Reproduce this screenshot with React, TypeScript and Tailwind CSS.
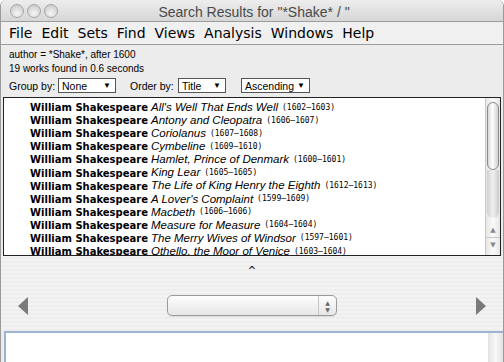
import React from "react"

const works: [string, string][] = [
  ["All's Well That Ends Well", "1602–1603"],
  ["Antony and Cleopatra", "1606–1607"],
  ["Coriolanus", "1607–1608"],
  ["Cymbeline", "1609–1610"],
  ["Hamlet, Prince of Denmark", "1600–1601"],
  ["King Lear", "1605–1605"],
  ["The Life of King Henry the Eighth", "1612–1613"],
  ["A Lover's Complaint", "1599–1609"],
  ["Macbeth", "1606–1606"],
  ["Measure for Measure", "1604–1604"],
  ["The Merry Wives of Windsor", "1597–1601"],
  ["Othello, the Moor of Venice", "1603–1604"],
]

const menus = ["File", "Edit", "Sets", "Find", "Views", "Analysis", "Windows", "Help"]

function Select({ label, w }: { label: string; w: string }) {
  return (
    <div className={`flex h-[15px] items-center justify-between border border-[#555] bg-white pl-[3px] pr-[4px] ${w}`}>
      <span>{label}</span>
      <span className="text-[8px] leading-none">▼</span>
    </div>
  )
}

function Light() {
  return (
    <div className="h-[14px] w-[14px] rounded-full border border-[#a5a5a5] bg-[radial-gradient(circle_at_50%_70%,#f6f6f6,#d2d2d2_70%,#bdbdbd)]" />
  )
}

export default function App() {
  return (
    <div
      className="flex h-[362px] w-[504px] flex-col overflow-hidden rounded-t-[6px] border-x border-[#9a9a9a] bg-[#ececec] text-black"
      style={{ fontFamily: '"DejaVu Sans", sans-serif' }}
    >
      {/* title bar */}
      <div className="relative flex h-[21px] shrink-0 items-center bg-[linear-gradient(#ededed,#d6d6d6)] pl-[9px]">
        <div className="flex gap-[3px]">
          <Light />
          <Light />
          <Light />
        </div>
        <div
          className="absolute inset-x-0 top-[2px] pl-[4px] text-center text-[14px] text-[#4a4a4a]"
          style={{ fontFamily: '"Liberation Sans", sans-serif' }}
        >
          Search Results for "*Shake* / "
        </div>
      </div>

      {/* menu bar */}
      <div className="flex h-[24px] shrink-0 items-center gap-[9px] border-y border-[#9c9c9c] bg-[#f0f0f0] pl-[8px] text-[14px]">
        {menus.map((m) => (
          <span key={m}>{m}</span>
        ))}
      </div>

      {/* query info */}
      <div className="flex shrink-0 flex-col pl-[8px] pt-[3px] text-[10px] leading-[14px]" style={{ fontFamily: '"Liberation Sans", sans-serif' }}>
        <span>author = *Shake*, after 1600</span>
        <span>19 works found in 0.6 seconds</span>
        <div className="mt-[2px] flex items-center text-[10.5px]">
          <span className="w-[49px]">Group by:</span>
          <Select label="None" w="w-[58px]" />
          <span className="ml-[14px] w-[48px]">Order by:</span>
          <Select label="Title" w="w-[48px]" />
          <div className="ml-[15px]">
            <Select label="Ascending" w="w-[69px]" />
          </div>
        </div>
      </div>

      {/* results list */}
      <div className="mx-[2px] mt-[4px] flex h-[159px] shrink-0 overflow-hidden border border-[#222] bg-white">
        <div className="flex-1 overflow-hidden pl-[26px] pt-[3px]">
          {works.map(([t, d]) => (
            <div key={t} className="flex h-[13.1px] items-center whitespace-nowrap">
              <span className="text-[10px] font-bold">William Shakespeare</span>
              <span className="ml-[3px] text-[11.5px] italic" style={{ fontFamily: '"Liberation Sans", sans-serif' }}>
                {t}
              </span>
              <span className="ml-[4px] text-[8px]" style={{ fontFamily: '"DejaVu Sans Mono", monospace' }}>
                ({d})
              </span>
            </div>
          ))}
        </div>
        <div className="flex w-[15px] shrink-0 flex-col border-l border-[#c8c8c8] bg-[linear-gradient(90deg,#e6e6e6,#fafafa_50%,#e6e6e6)]">
          <div className="mx-[1px] mt-[4px] h-[68px] rounded-full border border-[#8a8a8a] bg-[linear-gradient(90deg,#d8d8d8,#ffffff_45%,#cfcfcf)]" />
          <div className="mx-[1px] h-[48px] rounded-b-full bg-[linear-gradient(90deg,#d0d0d0,#f0f0f0_50%,#cacaca)]" />
          <div className="mt-[5px] flex h-[15px] items-center justify-center border-b border-[#c8c8c8] text-[7px] text-[#888]">▲</div>
          <div className="flex h-[14px] items-center justify-center text-[7px] text-[#888]">▼</div>
        </div>
      </div>

      {/* browser strip */}
      <div className="flex h-[75px] shrink-0 flex-col bg-[repeating-linear-gradient(0deg,#ededed_0px,#ededed_2px,#f3f3f3_2px,#f3f3f3_4px)]">
        <div className="flex h-[22px] items-center justify-center pt-[7px] text-[10px] leading-none">^</div>
        <div className="mt-[17px] flex items-center justify-between px-[17px]">
          <svg width="10" height="18" viewBox="0 0 10 18">
            <path d="M10 0 L0 9 L10 18 Z" fill="#7a7a7a" />
          </svg>
          <div className="flex h-[21px] w-[170px] items-center justify-end rounded-[5px] border border-[#9a9a9a] bg-[linear-gradient(#fdfdfd,#e6e6e6)] shadow-[0_1px_1px_rgba(0,0,0,0.1)]">
            <div className="flex h-full w-[18px] flex-col items-center justify-center border-l border-[#c5c5c5] text-[6px] leading-[7px] text-[#666]">
              <span>▲</span>
              <span>▼</span>
            </div>
          </div>
          <svg width="10" height="18" viewBox="0 0 10 18">
            <path d="M0 0 L10 9 L0 18 Z" fill="#7a7a7a" />
          </svg>
        </div>
      </div>

      {/* detail pane */}
      <div className="ml-[3px] flex flex-1 border-l-2 border-t-2 border-[#9db3cf] bg-white">
        <div className="flex-1" />
        <div className="w-[15px] bg-[linear-gradient(90deg,#e2e2e2,#f8f8f8_50%,#e2e2e2)]" />
      </div>
    </div>
  )
}
